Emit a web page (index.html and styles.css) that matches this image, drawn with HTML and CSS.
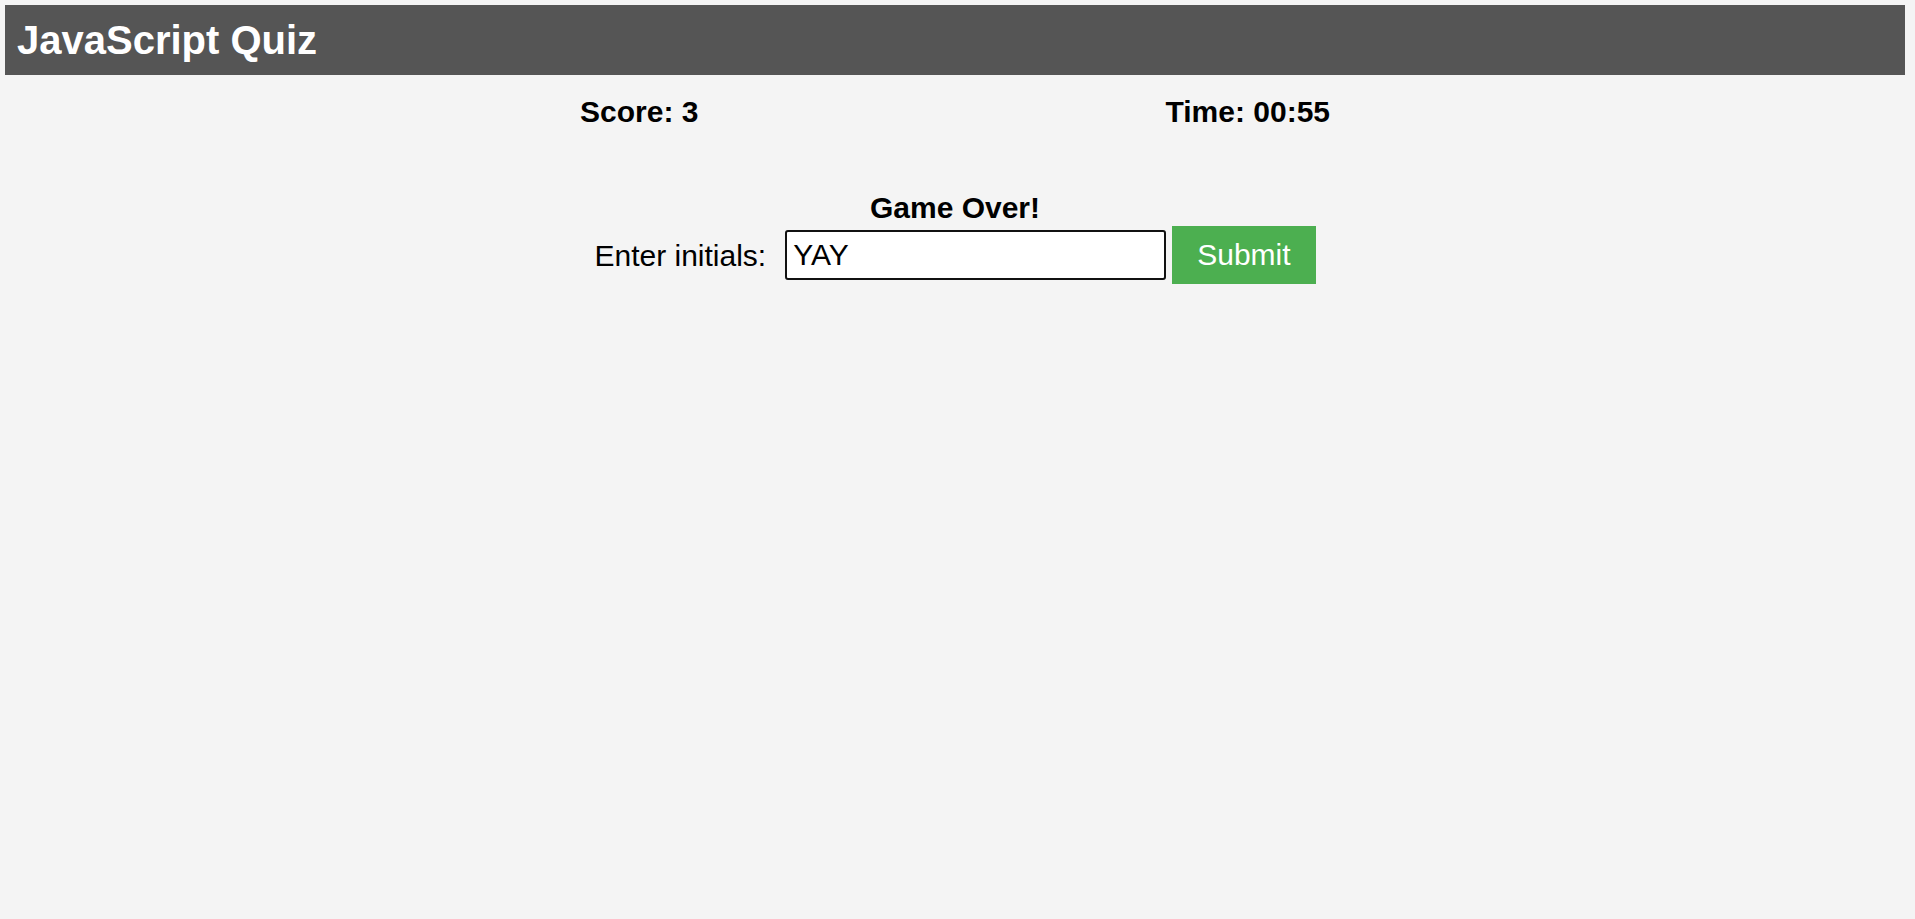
FILE: index.html
```html
<!DOCTYPE html>
<html lang="en">
<head>
<meta charset="utf-8">
<title>JavaScript Quiz</title>
<link rel="stylesheet" href="styles.css">
</head>
<body>
<header class="site-header">
  <h1 class="site-title">JavaScript Quiz</h1>
</header>
<main class="quiz">
  <div class="status-bar">
    <span class="score">Score: 3</span>
    <span class="timer">Time: 00:55</span>
  </div>
  <h2 class="game-over">Game Over!</h2>
  <form class="entry-form">
    <label class="entry-label" for="initials">Enter initials:</label>
    <input class="entry-input" id="initials" type="text" value="YAY" autofocus>
    <button class="entry-submit" type="button">Submit</button>
  </form>
</main>
</body>
</html>
```
FILE: styles.css
```css
html, body {
  background: #f4f4f4;
}

body {
  margin: 5px 10px 5px 5px;
  font-family: "Liberation Sans", Arial, sans-serif;
  color: #000;
}

.site-header {
  height: 70px;
  background: #555555;
  display: flex;
  align-items: center;
  padding: 0 12px;
}

.site-title {
  margin: 0;
  color: #fff;
  font-size: 40px;
  font-weight: bold;
  line-height: 46px;
}

.quiz {
  display: flex;
  flex-direction: column;
  align-items: center;
}

.status-bar {
  width: 750px;
  margin-top: 19px;
  display: flex;
  justify-content: space-between;
  font-size: 30px;
  font-weight: bold;
  line-height: 35px;
}

.game-over {
  margin: 62px 0 0;
  font-size: 30px;
  font-weight: bold;
  line-height: 34px;
  text-align: center;
}

.entry-form {
  margin-top: 1px;
  display: flex;
  align-items: center;
}

.entry-label {
  font-size: 30px;
  line-height: 35px;
  margin-right: 19px;
}

.entry-input {
  box-sizing: border-box;
  width: 381px;
  height: 50px;
  border: 2px solid #111;
  border-radius: 3px;
  background: #fff;
  padding: 0 6px;
  font-family: "Liberation Sans", Arial, sans-serif;
  font-size: 30px;
  color: #000;
  outline: none;
  caret-color: #000;
}

.entry-submit {
  margin-left: 6px;
  height: 58px;
  padding: 0 25px;
  border: none;
  background: #4caf50;
  color: #fff;
  font-family: "Liberation Sans", Arial, sans-serif;
  font-size: 30px;
  cursor: pointer;
}
```
